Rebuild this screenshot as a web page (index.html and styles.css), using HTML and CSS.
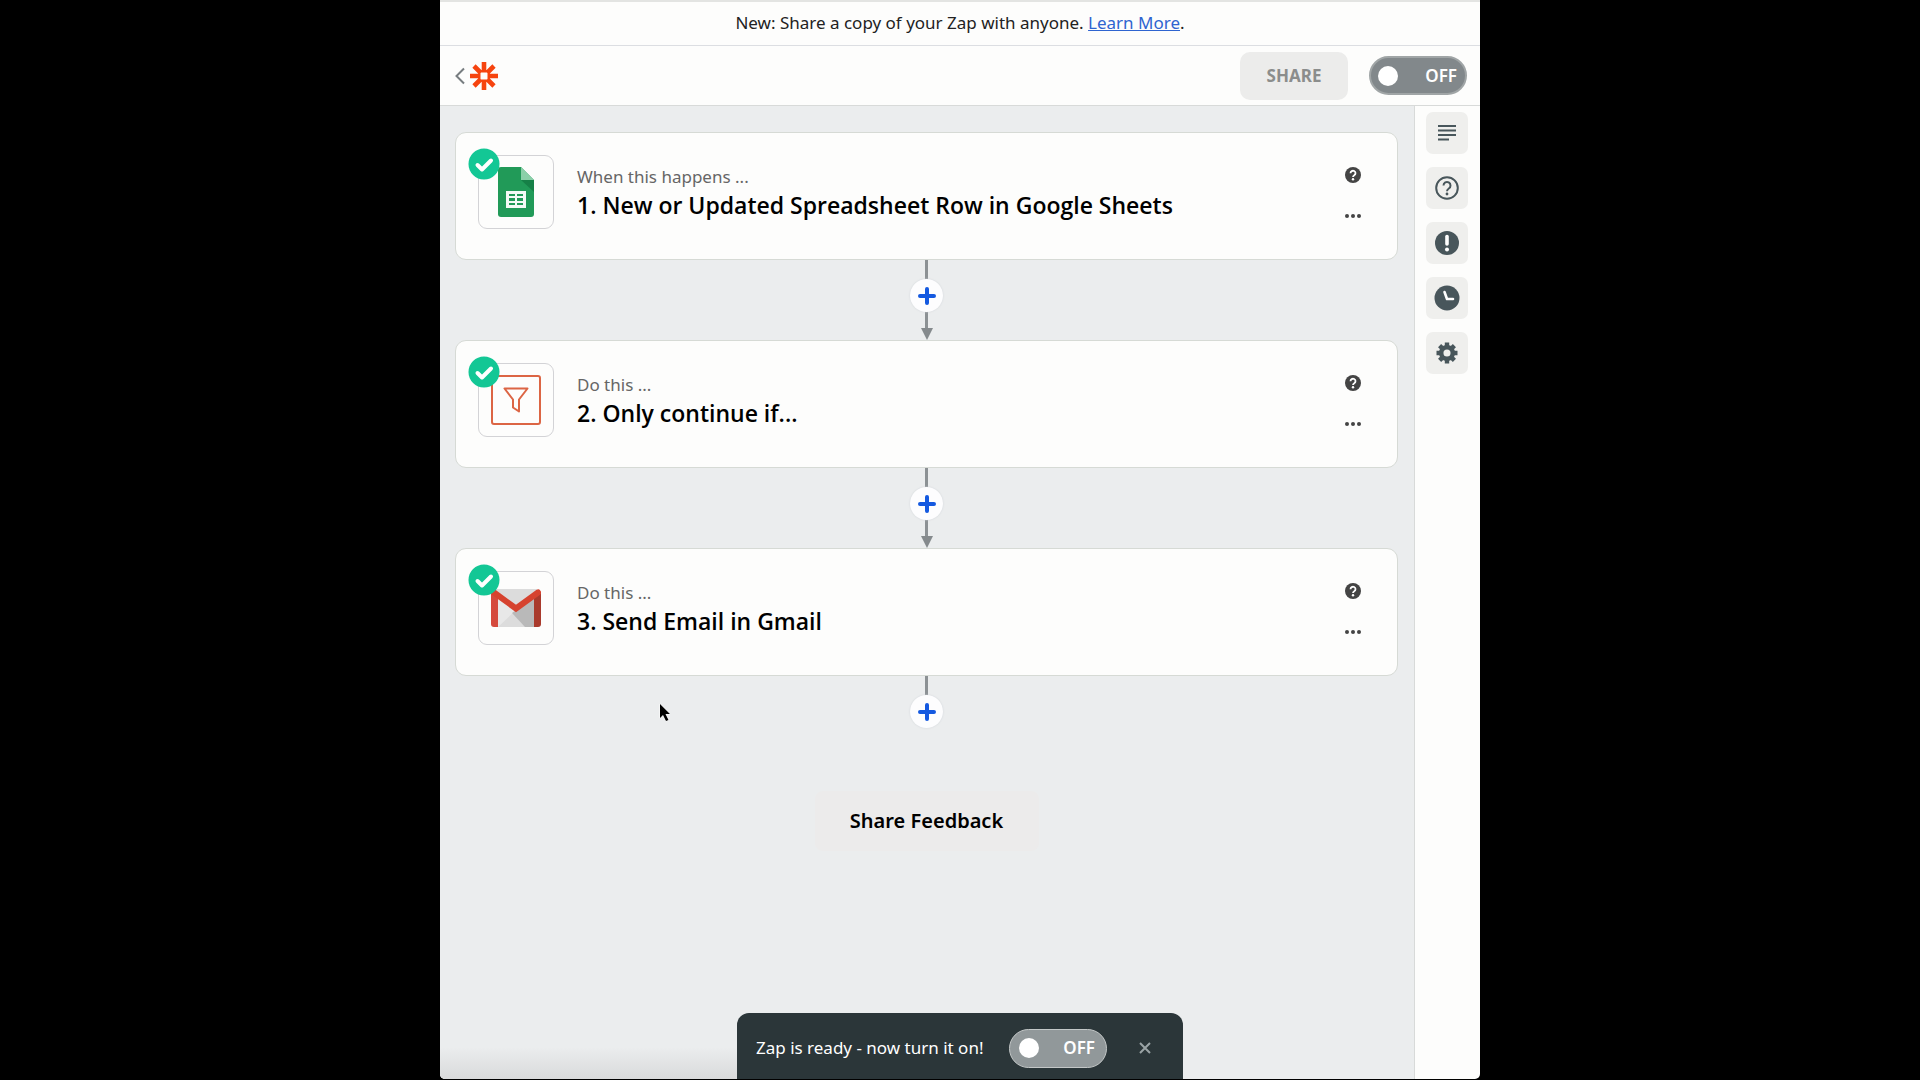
FILE: index.html
```html
<!DOCTYPE html>
<html lang="en">
<head>
<meta charset="utf-8">
<meta name="viewport" content="width=device-width, initial-scale=1">
<title>Zap editor</title>
<link rel="stylesheet" href="styles.css">
</head>
<body>
<svg class="sprite" aria-hidden="true">
  <symbol id="check" viewBox="0 0 32 32">
    <circle cx="16" cy="16" r="15.500" fill="#13c795"/>
    <path d="M9.500 17l4.500 4.500 9-9" fill="none" stroke="#fff" stroke-width="4" stroke-linecap="round" stroke-linejoin="round"/>
  </symbol>
  <symbol id="help" viewBox="0 0 16 16">
    <circle cx="8" cy="8" r="8" fill="#444"/>
    <path d="M5.500 6.200a2.500 2.400 0 1 1 3.800 2c-.9.600-1.300.9-1.300 1.700" fill="none" stroke="#fff" stroke-width="1.800"/>
    <circle cx="8" cy="12.200" r="1.200" fill="#fff"/>
  </symbol>
  <symbol id="dots" viewBox="0 0 16 16">
    <g fill="#444"><circle cx="2" cy="8" r="2"/><circle cx="8" cy="8" r="2"/><circle cx="14" cy="8" r="2"/></g>
  </symbol>
  <symbol id="plus" viewBox="0 0 18 18">
    <path d="M9 2v14M2 9h14" stroke="#1459e0" stroke-width="4" stroke-linecap="round"/>
  </symbol>
</svg>

<div class="window">
  <p class="banner">New: Share a copy of your Zap with anyone. <a href="#">Learn More</a>.</p>

  <header class="topbar">
    <a class="home" href="#" aria-label="Back to dashboard">
      <svg width="10" height="18" viewBox="0 0 10 18"><path d="M9 1.500L1.500 9 9 16.500" fill="none" stroke="#777d80" stroke-width="2"/></svg>
      <svg width="30" height="30" viewBox="0 0 30 30"><path d="M15 1v9M15 20v9M1 15h9M20 15h9M5 5l6.500 6.500M18.500 18.500L25 25M25 5l-6.500 6.500M11.500 18.500L5 25" stroke="#f6440f" stroke-width="4.600"/><path d="M11.500 10.500h7l1 1v7l-1 1h-7l-1-1v-7z" fill="none" stroke="#f6440f" stroke-width="2"/></svg>
    </a>
    <button class="share" type="button" disabled>SHARE</button>
    <label class="toggle"><input type="checkbox">OFF</label>
  </header>

  <div class="body">
    <main class="canvas">
      <section class="step">
        <div class="app">
          <svg class="badge" width="32" height="32"><use href="#check"/></svg>
          <svg width="36" height="50" viewBox="0 0 36 50"><path d="M3 0h20l13 13v34a3 3 0 0 1-3 3H3a3 3 0 0 1-3-3V3a3 3 0 0 1 3-3z" fill="#219a58"/><path d="M23 13l13 12V13z" fill="#168047"/><path d="M23 0l13 13H23z" fill="#8bd0a9"/><path d="M8 24h20v17H8z" fill="#f4faf6"/><path d="M11 27h6v2h-6zM19 27h6v2h-6zM11 31h6v3h-6zM19 31h6v3h-6zM11 36h6v2h-6zM19 36h6v2h-6z" fill="#219a58"/></svg>
        </div>
        <div class="text"><p>When this happens ...</p><h2>1. New or Updated Spreadsheet Row in Google Sheets</h2></div>
        <div class="actions">
          <button type="button" aria-label="Help"><svg width="16" height="16"><use href="#help"/></svg></button>
          <button type="button" aria-label="More"><svg width="16" height="16"><use href="#dots"/></svg></button>
        </div>
      </section>

      <div class="connector">
        <button type="button" aria-label="Add step"><svg width="18" height="18"><use href="#plus"/></svg></button>
        <svg class="arrow" width="12" height="12" viewBox="0 0 12 12"><path d="M0 0h12L6 12z" fill="#858a8d"/></svg>
      </div>

      <section class="step">
        <div class="app">
          <svg class="badge" width="32" height="32"><use href="#check"/></svg>
          <svg width="50" height="50" viewBox="0 0 50 50" fill="none" stroke="#dc6544" stroke-width="2"><rect x="1" y="1" width="48" height="48" rx="2"/><path d="M13.500 13.500h23L28 24.500v12l-6-4v-8z" stroke-linejoin="round"/></svg>
        </div>
        <div class="text"><p>Do this ...</p><h2>2. Only continue if...</h2></div>
        <div class="actions">
          <button type="button" aria-label="Help"><svg width="16" height="16"><use href="#help"/></svg></button>
          <button type="button" aria-label="More"><svg width="16" height="16"><use href="#dots"/></svg></button>
        </div>
      </section>

      <div class="connector">
        <button type="button" aria-label="Add step"><svg width="18" height="18"><use href="#plus"/></svg></button>
        <svg class="arrow" width="12" height="12" viewBox="0 0 12 12"><path d="M0 0h12L6 12z" fill="#858a8d"/></svg>
      </div>

      <section class="step">
        <div class="app">
          <svg class="badge" width="32" height="32"><use href="#check"/></svg>
          <svg width="50" height="38" viewBox="0 0 50 38"><path d="M4 0h42v38H4z" fill="#dcdcdc"/><path d="M7 38l18-17L7 9z" fill="#e8e8e8"/><path d="M25 21L44 7v31H34L21 24z" fill="#b9b9b9"/><path d="M0 4l7 4v30H3a3 3 0 0 1-3-3z" fill="#d54a3d"/><path d="M50 4l-7 4v30h4a3 3 0 0 0 3-3z" fill="#a93a2c"/><path d="M3 3.500l22 16 22-16" fill="none" stroke="#d6432f" stroke-width="6" stroke-linecap="round"/></svg>
        </div>
        <div class="text"><p>Do this ...</p><h2>3. Send Email in Gmail</h2></div>
        <div class="actions">
          <button type="button" aria-label="Help"><svg width="16" height="16"><use href="#help"/></svg></button>
          <button type="button" aria-label="More"><svg width="16" height="16"><use href="#dots"/></svg></button>
        </div>
      </section>

      <div class="connector last">
        <button type="button" aria-label="Add step"><svg width="18" height="18"><use href="#plus"/></svg></button>
      </div>

      <button class="feedback" type="button">Share Feedback</button>
    </main>

    <nav class="rail" aria-label="Zap tools">
      <button type="button" aria-label="Outline"><svg width="18" height="16" viewBox="0 0 18 16"><path d="M0 1h18M0 5.500h18M0 10h18M0 14.500h11" stroke="#48565b" stroke-width="2"/></svg></button>
      <button type="button" aria-label="Help"><svg width="24" height="24" viewBox="0 0 24 24"><circle cx="12" cy="12" r="10.800" fill="none" stroke="#48565b" stroke-width="2"/><path d="M8.500 9.500a3.500 3.500 0 1 1 5.300 3c-1.200.8-1.800 1.400-1.800 2.800" fill="none" stroke="#48565b" stroke-width="2"/><circle cx="12" cy="18" r="1.400" fill="#48565b"/></svg></button>
      <button type="button" aria-label="Alerts"><svg width="24" height="24" viewBox="0 0 24 24"><circle cx="12" cy="12" r="12" fill="#48565b"/><path d="M12 5.500v7.500" stroke="#fff" stroke-width="3.600" stroke-linecap="round"/><circle cx="12" cy="18.500" r="2" fill="#fff"/></svg></button>
      <button type="button" aria-label="History"><svg width="26" height="26" viewBox="0 0 26 26"><circle cx="13" cy="13" r="12.500" fill="#48565b"/><path d="M10.500 7l2.500 7h6" fill="none" stroke="#fff" stroke-width="2.600" stroke-linecap="round" stroke-linejoin="round"/></svg></button>
      <button type="button" aria-label="Settings"><svg width="22" height="22" viewBox="0 0 22 22"><circle cx="11" cy="11" r="5.800" fill="none" stroke="#48565b" stroke-width="4.500"/><path d="M11 .5v4M11 17.500v4M.5 11h4M17.500 11h4M3.600 3.600l2.800 2.800M15.600 15.600l2.800 2.800M18.400 3.600l-2.800 2.800M6.400 15.600l-2.800 2.800" stroke="#48565b" stroke-width="4.400"/></svg></button>
    </nav>
  </div>

  <div class="toast" role="status">
    <p>Zap is ready - now turn it on!</p>
    <label class="toggle light"><input type="checkbox">OFF</label>
    <button class="close" type="button" aria-label="Dismiss"><svg width="12" height="12" viewBox="0 0 12 12"><path d="M1 1l10 10M11 1L1 11" stroke="#9aa3a5" stroke-width="2"/></svg></button>
  </div>

  <svg class="cursor" width="14" height="20" viewBox="0 0 14 20"><path d="M1 1v14l3-3 3 6 2.500-1-3-6H11z" fill="#000" stroke="#fff" stroke-width="1" paint-order="stroke"/></svg>
</div>
</body>
</html>
```

FILE: styles.css
```css
* { box-sizing: border-box; }

body {
  margin: 0;
  background: #000;
  color: #000;
  font-family: "Noto Sans", "Open Sans", sans-serif;
  font-size: 17px;
  line-height: 28px;
}

p, h2 { margin: 0; }

svg { display: block; flex: none; }

button {
  display: flex;
  align-items: center;
  justify-content: center;
  padding: 0;
  border: 0;
  background: none;
  color: inherit;
  font: inherit;
}

.sprite { display: none; }

.window {
  position: relative;
  display: flex;
  flex-direction: column;
  max-width: 1040px;
  min-height: calc(100vh - 1px);
  margin: 0 auto;
  overflow: hidden;
  border-top: 2px solid #e3e4e2;
  border-radius: 0 0 5px 5px;
  background: #fdfdfc;
}

.banner {
  padding: 7px 16px 8px;
  border-bottom: 1px solid #dcdee2;
  color: #222;
  text-align: center;
}

.banner a { color: #2f64d0; }

.topbar {
  display: flex;
  align-items: center;
  height: 60px;
  padding: 0 13px 0 15px;
  border-bottom: 1px solid #d8dad9;
}

.home {
  display: flex;
  align-items: center;
  gap: 4px;
  margin-right: auto;
}

.share {
  width: 108px;
  height: 48px;
  margin-right: 21px;
  border-radius: 10px;
  background: #ececeb;
  color: #8b8d8c;
  font-weight: 700;
}

.toggle {
  display: flex;
  align-items: center;
  justify-content: space-between;
  width: 98px;
  height: 39px;
  padding: 0 8px 0 7px;
  border: 2px solid #a0a5a6;
  border-radius: 20px;
  background: #82888b;
  color: #fff;
  font-weight: 600;
}

.toggle input {
  width: 20px;
  height: 20px;
  margin: 0;
  appearance: none;
  border-radius: 50%;
  background: #fff;
}

.toggle.light {
  padding: 0 11px 0 9px;
  border: 1px solid #c3c7c7;
  background: #91989a;
}

.body {
  display: flex;
  flex: 1;
}

.canvas {
  flex: 1;
  padding: 26px 16px 100px 15px;
  background:
    linear-gradient(to top, #d9dadb, transparent 32px) left bottom / 40% 32px no-repeat,
    #ebedee;
}

.step {
  display: flex;
  align-items: center;
  gap: 23px;
  min-height: 128px;
  padding: 22px 32px 30px 22px;
  border: 1px solid #d6dad5;
  border-radius: 11px;
  background: #fdfdfc;
}

.app {
  position: relative;
  display: flex;
  align-items: center;
  justify-content: center;
  width: 76px;
  height: 74px;
  border: 1px solid #d3d3d6;
  border-radius: 9px;
}

.badge {
  position: absolute;
  top: -8px;
  left: -11px;
}

.text {
  flex: 1;
  padding-bottom: 3px;
}

.text p { color: #666; }

.text h2 {
  font-family: "Open Sans", "Noto Sans", sans-serif;
  font-size: 23px;
  font-weight: 600;
  line-height: 28px;
}

.actions {
  display: flex;
  flex-direction: column;
  align-self: flex-start;
  gap: 17px;
  padding-top: 8px;
}

.actions button {
  width: 24px;
  height: 24px;
}

.connector {
  display: flex;
  flex-direction: column;
  align-items: center;
  height: 80px;
  padding-top: 19px;
  background: linear-gradient(#8c9194, #8c9194) center top / 3px 70px no-repeat;
}

.connector button {
  width: 33px;
  height: 33px;
  border-radius: 50%;
  background: #fdfdfe;
  box-shadow: 0 0 2px #cfd3d8;
}

.arrow { margin-top: auto; }

.connector.last { background-size: 3px 30px; }

.feedback {
  width: 224px;
  height: 60px;
  margin: 35px auto 0;
  border-radius: 8px;
  background: #ecebeb;
  font-size: 20px;
  font-weight: 600;
}

.rail {
  display: flex;
  flex-direction: column;
  align-items: center;
  gap: 13px;
  width: 66px;
  padding-top: 6px;
  padding-right: 2px;
  border-left: 1px solid #d8dad9;
}

.rail button {
  width: 42px;
  height: 42px;
  border-radius: 7px;
  background: #efefed;
}

.toast {
  position: absolute;
  bottom: 0;
  left: 50%;
  display: flex;
  align-items: center;
  width: 446px;
  height: 66px;
  padding: 4px 16px 0 19px;
  border-radius: 12px 12px 0 0;
  background: #2b3639;
  color: #fff;
  transform: translateX(-50%);
}

.toast p { flex: 1; }

.close {
  width: 44px;
  height: 44px;
  margin-left: 16px;
}

.cursor {
  position: absolute;
  top: 701px;
  left: 219px;
}
```
